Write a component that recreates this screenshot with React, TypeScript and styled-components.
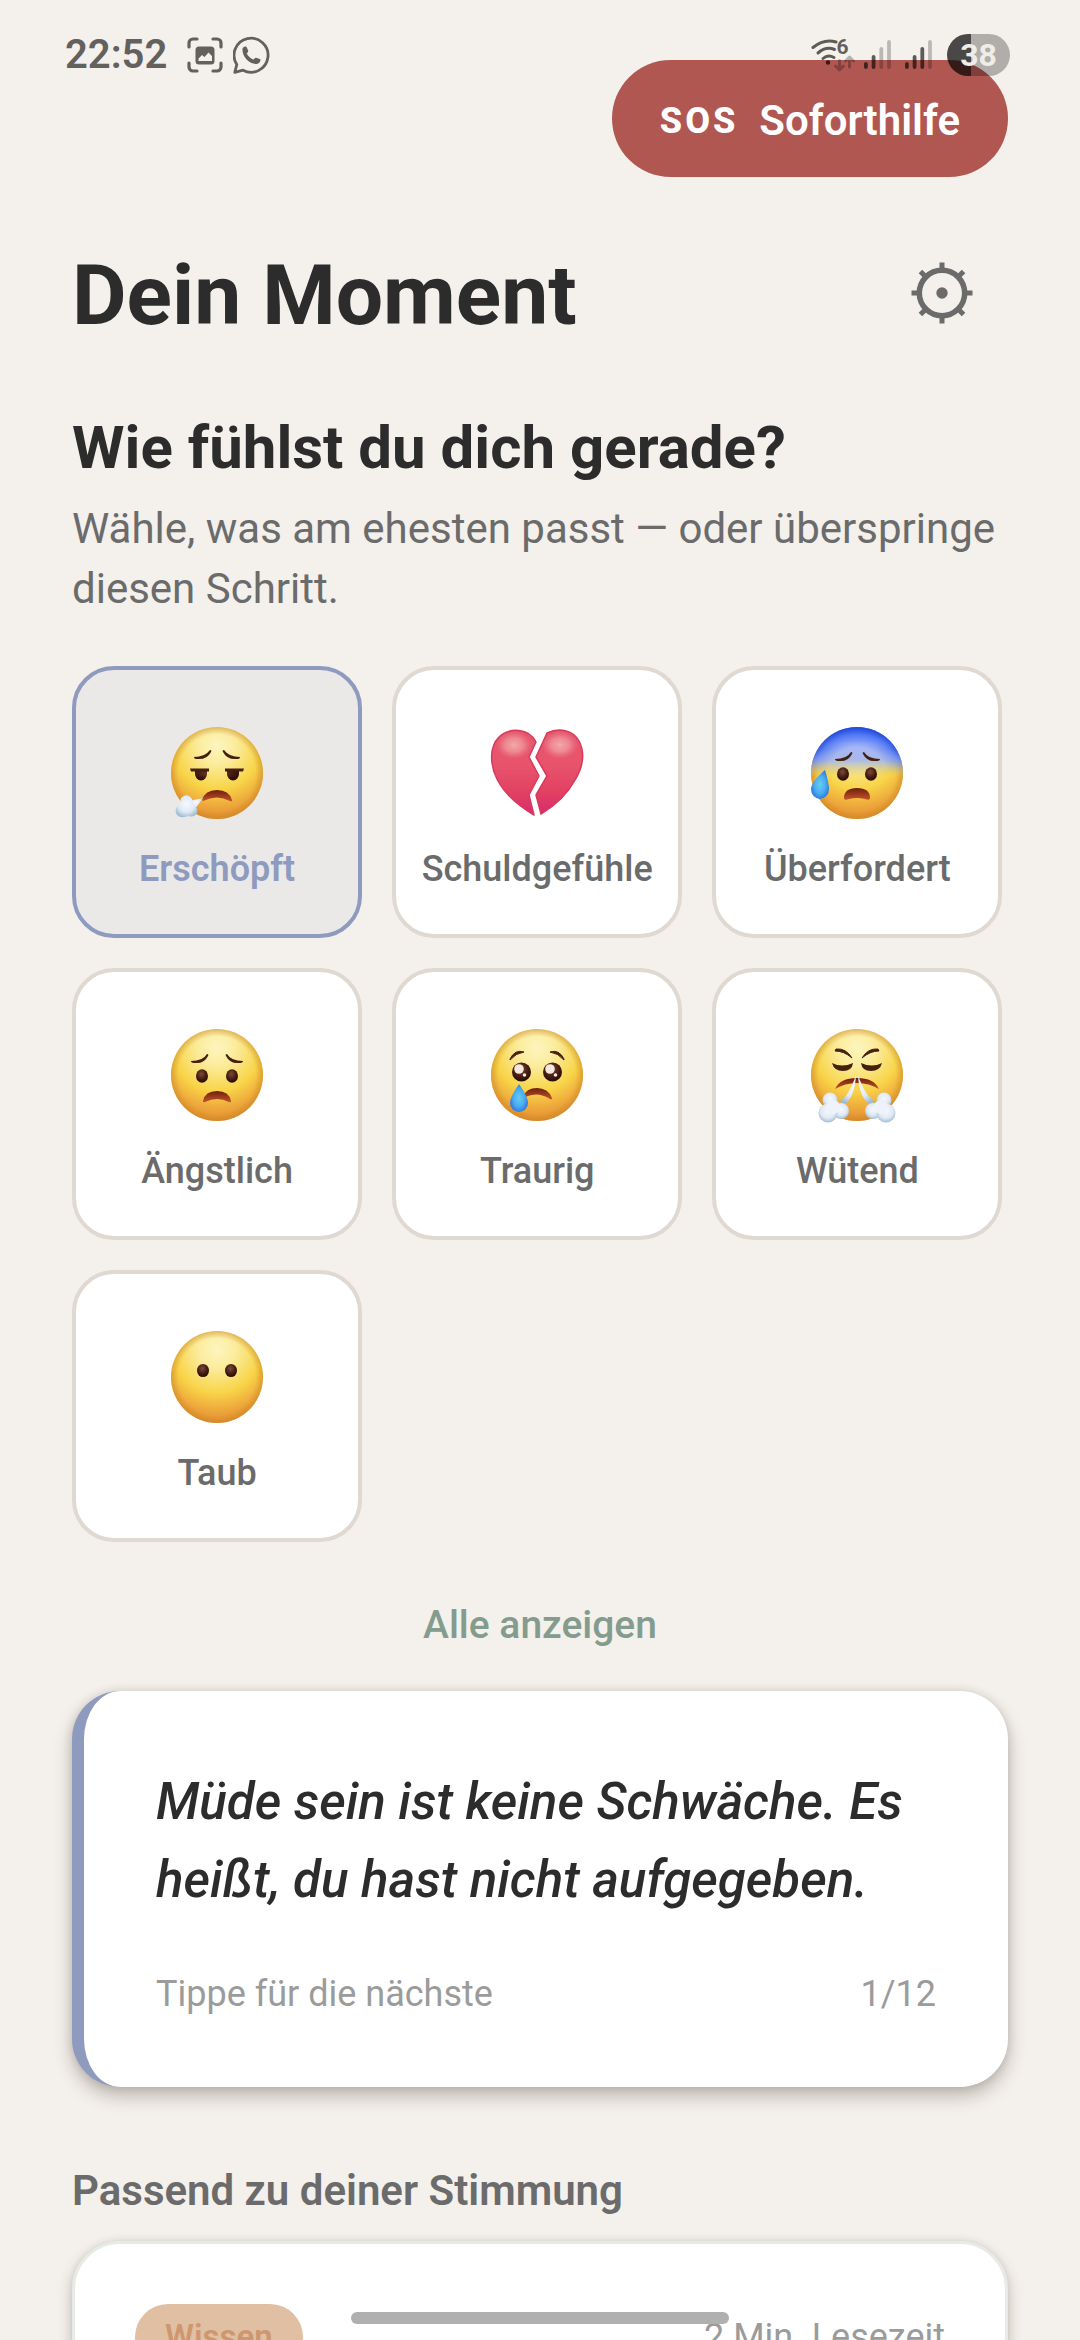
import React, { useId, useState } from "react";
import styled, { createGlobalStyle } from "styled-components";

const color = {
  page: "#f4f0eb",
  ink: "#2c2c2c",
  soft: "#6b6b6b",
  muted: "#9b9b9b",
  line: "#dfd9d1",
  blue: "#8e9bbf",
  green: "#839c8e",
  red: "#b15752",
};

const GlobalStyle = createGlobalStyle`
  * { box-sizing: border-box; }
  body {
    margin: 0;
    background: ${color.page};
    font-family: Roboto, "Noto Sans", sans-serif;
    color: ${color.ink};
  }
  button { font-family: inherit; border: 0; background: none; padding: 0; cursor: pointer; }
  h1, h2, h3, p { margin: 0; }
`;

const Screen = styled.div`
  position: relative;
  height: 100vh;
  overflow: hidden;
  padding: 60px 72px 0;
`;

const StatusBar = styled.div`
  position: absolute;
  top: 34px;
  left: 65px;
  right: 70px;
  height: 42px;
  display: flex;
  align-items: center;
  justify-content: space-between;
  pointer-events: none;
  z-index: 2;
`;

const StatusGroup = styled.div`
  display: flex;
  align-items: center;
`;

const Clock = styled.span`
  font-size: 40px;
  line-height: 42px;
  font-weight: 600;
  color: #62615e;
  margin-right: 20px;
`;

const Battery = styled.span`
  width: 63px;
  height: 42px;
  margin-left: 13px;
  border-radius: 21px;
  display: flex;
  align-items: center;
  justify-content: center;
  font-size: 32px;
  line-height: 42px;
  font-weight: 700;
  color: #f0ece8;
  background: linear-gradient(90deg, rgba(0, 0, 0, 0.7) 24px, rgba(0, 0, 0, 0.28) 24px);
`;

const SosRow = styled.div`
  display: flex;
  justify-content: flex-end;
`;

const SosButton = styled.button`
  display: flex;
  align-items: center;
  gap: 21px;
  height: 117px;
  padding: 4px 48px 0;
  border-radius: 60px;
  background: ${color.red};
  color: #fff;
  font-size: 42px;
  font-weight: 600;
`;

const SosMark = styled.span`
  font-size: 36px;
  font-weight: 800;
  letter-spacing: 3px;
`;

const Header = styled.header`
  display: flex;
  align-items: center;
  justify-content: space-between;
  margin-top: 52px;
`;

const Title = styled.h1`
  padding-top: 2px;
  font-size: 84px;
  line-height: 96px;
  font-weight: 700;
`;

const IconButton = styled.button`
  width: 132px;
  height: 132px;
  display: grid;
  place-items: center;
`;

const Question = styled.h2`
  margin-top: 51px;
  font-size: 60px;
  line-height: 72px;
  font-weight: 700;
`;

const Hint = styled.p`
  margin-top: 15px;
  font-size: 42px;
  line-height: 60px;
  color: ${color.soft};
`;

const MoodGrid = styled.div`
  display: grid;
  grid-template-columns: repeat(3, 31%);
  gap: 30px;
  margin-top: 47px;
`;

const MoodCard = styled.button<{ $active: boolean }>`
  height: 272px;
  display: flex;
  flex-direction: column;
  align-items: center;
  justify-content: center;
  gap: 29px;
  border: 4px solid ${(p) => (p.$active ? color.blue : color.line)};
  border-radius: 42px;
  background: ${(p) => (p.$active ? "#eae9e7" : "#fff")};
  color: ${(p) => (p.$active ? color.blue : color.soft)};
  font-size: 36px;
  line-height: 42px;
  font-weight: ${(p) => (p.$active ? 600 : 500)};
`;

const ShowAll = styled.button`
  display: block;
  margin: 29px auto 12px;
  padding: 30px;
  font-size: 39px;
  line-height: 48px;
  font-weight: 500;
  color: ${color.green};
`;

const QuoteCard = styled.button`
  display: block;
  width: 100%;
  padding: 72px;
  border-left: 12px solid ${color.blue};
  border-radius: 48px;
  background: #fff;
  text-align: left;
  box-shadow: 0 9px 18px rgba(60, 50, 40, 0.3), 0 0 9px rgba(60, 50, 40, 0.12);
`;

const Quote = styled.span`
  display: block;
  font-size: 51px;
  line-height: 78px;
  font-weight: 500;
  font-style: italic;
  color: ${color.ink};
`;

const QuoteFooter = styled.span`
  display: flex;
  justify-content: space-between;
  margin-top: 54px;
  font-size: 36px;
  line-height: 42px;
  color: ${color.muted};
`;

const SectionTitle = styled.h3`
  margin: 74px 0 20px;
  font-size: 42px;
  line-height: 60px;
  font-weight: 600;
  color: ${color.soft};
`;

const ArticleCard = styled.article`
  display: flex;
  align-items: center;
  justify-content: space-between;
  padding: 60px;
  border: 3px solid #e6ebe8;
  border-radius: 48px;
  background: #fff;
  box-shadow: 0 6px 15px rgba(60, 50, 40, 0.24), 0 0 6px rgba(60, 50, 40, 0.1);
`;

const Tag = styled.span`
  padding: 0 30px;
  border-radius: 36px;
  background: #e1bfa3;
  color: #cd9770;
  font-size: 33px;
  line-height: 66px;
  font-weight: 600;
`;

const ReadTime = styled.span`
  font-size: 36px;
  line-height: 42px;
  color: ${color.muted};
`;

const HomeHandle = styled.div`
  position: absolute;
  bottom: 16px;
  left: 50%;
  width: 35%;
  height: 12px;
  transform: translateX(-50%);
  border-radius: 6px;
  background: #b0b0b0;
`;

const EmojiSvg = styled.svg`
  display: block;
  overflow: visible;
`;

const ChatSvg = styled.svg`
  margin-left: 10px;
`;

type MoodKind = "tired" | "guilt" | "overwhelmed" | "anxious" | "sad" | "angry" | "numb";

const moods: { kind: MoodKind; label: string }[] = [
  { kind: "tired", label: "Erschöpft" },
  { kind: "guilt", label: "Schuldgefühle" },
  { kind: "overwhelmed", label: "Überfordert" },
  { kind: "anxious", label: "Ängstlich" },
  { kind: "sad", label: "Traurig" },
  { kind: "angry", label: "Wütend" },
  { kind: "numb", label: "Taub" },
];

const brown = "#45200f";

function Features({ kind, id }: { kind: MoodKind; id: string }) {
  const mouth = `url(#${id}mouth)`;
  const eye = `url(#${id}eye)`;
  const drop = `url(#${id}drop)`;
  const cloud = `url(#${id}cloud)`;
  switch (kind) {
    case "tired":
      return (
        <>
          <path d="M23 30q11 0 16-7q2 0 1 2q-4 8-14 7q-3 0-3-2zM69 30q-11 0-16-7q-2 0-1 2q4 8 14 7q3 0 3-2z" fill={brown} />
          <path d="M24 43h12v4a6 6.500 0 0 1-12 0zM56 43h12v4a6 6.500 0 0 1-12 0z" fill={eye} />
          <path d="M19 41.500h19v3H20zM54 41.500h19l-1 3H54z" fill={brown} />
          <path d="M31 73q3-10 15-10q12 0 15 10q1 2-2 1q-13-7-27 0z" fill={mouth} />
          <path d="M32 71L18 74l6 8z" fill={cloud} />
          <path d="M10 71q6-6 11 1q2 3 1 6q6 3 4 8q-3 5-9 3q-7 3-11-1q-4-6 3-11z" fill={cloud} />
        </>
      );
    case "overwhelmed":
      return (
        <>
          <path d="M24 32q12 0 16-7q2 0 1 2q-4 8-13 7q-4 0-4-2zM69 32q-12 0-16-7q-2 0-1 2q4 8 13 7q4 0 4-2z" fill={brown} />
          <ellipse cx="32" cy="47" rx="6" ry="6.800" fill={eye} />
          <ellipse cx="60" cy="47" rx="6" ry="6.800" fill={eye} />
          <path d="M33 71q0-10 13-10t13 10q0 3-5 1q-8-2-16 0q-5 2-5-1z" fill={mouth} />
          <path d="M14 43q4 13 4 19a9 10 0 0 1-18 0q0-7 14-19z" fill={drop} />
        </>
      );
    case "anxious":
      return (
        <>
          <path d="M20 32q12 0 16-7q2 0 1 2q-4 8-13 7q-4 0-4-2zM72 32q-12 0-16-7q-2 0-1 2q4 8 13 7q4 0 4-2z" fill={brown} />
          <ellipse cx="31" cy="47" rx="6" ry="6.800" fill={eye} />
          <ellipse cx="61" cy="47" rx="6" ry="6.800" fill={eye} />
          <path d="M32 72q2-10 14-10t14 10q0 2-2 1q-12-6-24 0q-2 1-2-1z" fill={mouth} />
        </>
      );
    case "sad":
      return (
        <>
          <path d="M19 30q5-10 14-7q-8 1-14 8zM73 30q-5-10-14-7q8 1 14 8z" fill={brown} stroke={brown} strokeWidth="1" />
          <circle cx="30.500" cy="43" r="9.500" fill={eye} />
          <circle cx="61.500" cy="43" r="9.500" fill={eye} />
          <ellipse cx="28" cy="40" rx="4.800" ry="4.800" fill="#f3e8df" />
          <ellipse cx="59" cy="40" rx="4.800" ry="4.800" fill="#f3e8df" />
          <circle cx="33.500" cy="46" r="1.800" fill="#f3e8df" />
          <circle cx="64.500" cy="46" r="1.800" fill="#f3e8df" />
          <path d="M32 68q3-9 14-9q11 0 15 10q1 2-2 1q-12-8-25-2z" fill={mouth} />
          <path d="M28 55q9 13 9 19a9 9 0 0 1-18 0q0-6 9-19z" fill={drop} />
        </>
      );
    case "angry":
      return (
        <>
          <path d="M25 20q10-1 16 9q-8-7-17-7zM67 20q-10-1-16 9q8-7 17-7z" fill={brown} stroke={brown} strokeWidth="1" />
          <path d="M21 34q10 5 21 0q-1 8-10 8t-11-8zM71 34q-10 5-21 0q1 8 10 8t11-8z" fill={brown} />
          <path d="M24 60q5-11 22-11t22 11q-10-6-22-6t-22 6z" fill={mouth} />
          <path d="M45 46q-8 23-17 26l5 4q11-8 12-30zM47 46q8 23 17 26l-5 4q-11-8-12-30z" fill={cloud} />
          <circle cx="19" cy="71" r="7.500" fill={cloud} />
          <circle cx="30" cy="82" r="8" fill={cloud} />
          <circle cx="17" cy="84" r="9.500" fill={cloud} />
          <circle cx="22" cy="78" r="7" fill="#eef3fb" />
          <circle cx="73" cy="71" r="7.500" fill={cloud} />
          <circle cx="62" cy="82" r="8" fill={cloud} />
          <circle cx="75" cy="84" r="9.500" fill={cloud} />
          <circle cx="70" cy="78" r="7" fill="#eef3fb" />
        </>
      );
    default:
      return (
        <>
          <ellipse cx="32" cy="39.500" rx="6" ry="6.600" fill={eye} />
          <ellipse cx="60" cy="39.500" rx="6" ry="6.600" fill={eye} />
        </>
      );
  }
}

function MoodEmoji({ kind }: { kind: MoodKind }) {
  const id = "m" + useId().replace(/[^a-zA-Z0-9]/g, "");
  return (
    <EmojiSvg width="104" height="104" viewBox="-6 -12 104 104" aria-hidden="true">
      <defs>
        <radialGradient id={`${id}face`} cx="0.5" cy="0.2" r="0.82">
          <stop offset="0" stopColor="#fdf5bf" />
          <stop offset="0.25" stopColor="#fbec9c" />
          <stop offset="0.58" stopColor="#f8d448" />
          <stop offset="0.82" stopColor="#eda63b" />
          <stop offset="1" stopColor="#e08a2e" />
        </radialGradient>
        <radialGradient id={`${id}rim`} cx="0.5" cy="0.5" r="0.5">
          <stop offset="0.84" stopColor="#c88420" stopOpacity="0" />
          <stop offset="1" stopColor="#c88420" stopOpacity="0.5" />
        </radialGradient>
        <linearGradient id={`${id}blue`} x1="0" y1="0" x2="0" y2="1">
          <stop offset="0" stopColor="#6d90f8" />
          <stop offset="0.18" stopColor="#a3b6fa" />
          <stop offset="0.36" stopColor="#aab9ea" />
          <stop offset="0.54" stopColor="#d0c880" stopOpacity="0" />
        </linearGradient>
        <radialGradient id={`${id}blueRim`} cx="0.5" cy="0.55" r="0.55">
          <stop offset="0.6" stopColor="#2f5cf0" stopOpacity="0" />
          <stop offset="0.85" stopColor="#2f5cf0" stopOpacity="0.6" />
          <stop offset="1" stopColor="#1c46d8" />
        </radialGradient>
        <linearGradient id={`${id}fade`} x1="0" y1="0" x2="0" y2="1">
          <stop offset="0.25" stopColor="#fff" />
          <stop offset="0.5" stopColor="#000" />
        </linearGradient>
        <mask id={`${id}top`}>
          <rect width="92" height="92" fill={`url(#${id}fade)`} />
        </mask>
        <radialGradient id={`${id}eye`} cx="0.45" cy="0.35" r="0.6">
          <stop offset="0" stopColor="#7a4a3a" />
          <stop offset="0.7" stopColor="#421a0e" />
          <stop offset="1" stopColor="#2e0f06" />
        </radialGradient>
        <linearGradient id={`${id}mouth`} x1="0" y1="0" x2="0" y2="1">
          <stop offset="0" stopColor="#6e1f0e" />
          <stop offset="1" stopColor="#c5532a" />
        </linearGradient>
        <radialGradient id={`${id}drop`} cx="0.5" cy="0.5" r="0.6">
          <stop offset="0" stopColor="#64cdf2" />
          <stop offset="0.5" stopColor="#4aaef0" />
          <stop offset="1" stopColor="#2767dc" />
        </radialGradient>
        <radialGradient id={`${id}cloud`} cx="0.5" cy="0.4" r="0.62">
          <stop offset="0" stopColor="#f6f9ff" />
          <stop offset="0.6" stopColor="#e0e9f4" />
          <stop offset="1" stopColor="#9dbbd2" />
        </radialGradient>
        <linearGradient id={`${id}heart`} x1="0" y1="0" x2="0" y2="1">
          <stop offset="0" stopColor="#e4566c" />
          <stop offset="0.4" stopColor="#e8546c" />
          <stop offset="0.75" stopColor="#e24062" />
          <stop offset="1" stopColor="#d62a70" />
        </linearGradient>
        <radialGradient id={`${id}shine`}>
          <stop offset="0" stopColor="#f3a9a8" />
          <stop offset="0.5" stopColor="#f0959b" stopOpacity="0.8" />
          <stop offset="1" stopColor="#ee7f8b" stopOpacity="0" />
        </radialGradient>
      </defs>
      {kind === "guilt" ? (
        <>
          <g fill={`url(#${id}heart)`} stroke="#d83a5c" strokeWidth="1.500" strokeLinejoin="round">
            <path d="M45 15C38 1 19 0 8 10C-2 20-1 38 6 52C14 68 31 81 43 88L38 68L48 49L38 30Z" />
            <path d="M56 6C68 0 82 3 88 14C95 27 91 42 84 53C76 68 62 80 50 87L45 68L56 49L45 30Z" />
          </g>
          <ellipse cx="23" cy="18" rx="18" ry="14" fill={`url(#${id}shine)`} />
          <ellipse cx="69" cy="18" rx="18" ry="14" fill={`url(#${id}shine)`} />
        </>
      ) : (
        <>
          <circle cx="46" cy="46" r="46" fill={`url(#${id}face)`} />
          <circle cx="46" cy="46" r="46" fill={`url(#${id}rim)`} />
          {kind === "overwhelmed" && (
            <>
              <circle cx="46" cy="46" r="46" fill={`url(#${id}blue)`} />
              <circle cx="46" cy="46" r="46" fill={`url(#${id}blueRim)`} mask={`url(#${id}top)`} />
            </>
          )}
          <Features kind={kind} id={id} />
        </>
      )}
    </EmojiSvg>
  );
}

function CaptureIcon() {
  return (
    <svg width="36" height="36" viewBox="0 0 36 36" fill="none" aria-hidden="true">
      <path
        d="M2 10V6a4 4 0 0 1 4-4h4M26 2h4a4 4 0 0 1 4 4v4M34 26v4a4 4 0 0 1-4 4h-4M10 34H6a4 4 0 0 1-4-4v-4"
        stroke="#62615e"
        strokeWidth="3.200"
        strokeLinecap="round"
      />
      <rect x="8.500" y="9.500" width="19" height="18" rx="3.500" fill="#62615e" />
      <path d="M11.500 24v-2.500l3.500-3.500 2.500 2 4-4.500 3.500 3.500v5z" fill={color.page} />
    </svg>
  );
}

function ChatCallIcon() {
  return (
    <ChatSvg width="37" height="38" viewBox="0 0 37 38" fill="none" aria-hidden="true">
      <path
        d="M3.800 28.500A17 17 0 1 1 10 34.200L1.800 36.300z"
        stroke="#62615e"
        strokeWidth="2.800"
        strokeLinejoin="round"
      />
      <path
        d="M9.500 12.500c.8-1.800 2.500-2.500 3.900-1.800l1.800 3.900c.3 1-.9 2.300-1.500 3 1.500 2.700 3.700 4.900 6.500 6 .9-.5 1.900-2 2.900-1.900l4.300 1.500c.4 2-.9 4.300-3.900 4.800-7.500.3-14.700-7.500-14-15.500z"
        fill="#62615e"
      />
    </ChatSvg>
  );
}

const SmallSix = styled.text`
  font-family: Roboto, sans-serif;
  font-size: 21px;
  font-weight: 700;
`;

/* Wi-Fi with traffic arrows, followed by the two SIM signal meters. */
function NetworkIcons() {
  const tops = [28, 21, 13, 6];
  return (
    <svg width="123" height="42" viewBox="811 34 123 42" fill="none" aria-hidden="true">
      <g stroke="#000" strokeOpacity="0.62" strokeWidth="3" strokeLinecap="round">
        <path d="M813 47.500Q824 38.500 836 42" />
        <path d="M818 53Q826 46 834.500 49.500" />
        <path d="M823 58.500Q828 54 834 57.500" />
      </g>
      <circle cx="828" cy="62.500" r="2.200" fill="#000" fillOpacity="0.7" />
      <SmallSix x="836.500" y="54" fill="#000" fillOpacity="0.62">
        6
      </SmallSix>
      <g stroke="#000" strokeOpacity="0.26" strokeWidth="3" strokeLinecap="round" strokeLinejoin="round">
        <path d="M839.500 60.500v9M835.500 66l4 4 4-4" />
        <path d="M849.500 67v-9M845.500 61l4-4 4 4" />
      </g>
      {[864, 905].map((x, sim) =>
        tops.map((t, i) => (
          <rect
            key={`${x}-${t}`}
            x={x + i * 7.7}
            y={34 + t}
            width="3.800"
            height={35 - t}
            rx="1.900"
            fill="#000"
            fillOpacity={i < 2 + sim ? 0.62 : 0.23}
          />
        ))
      )}
    </svg>
  );
}

function GearIcon() {
  return (
    <svg width="66" height="66" viewBox="0 2 66 66" fill="none" stroke={color.soft} aria-hidden="true">
      <circle cx="33" cy="33" r="22.700" strokeWidth="5.500" />
      <circle cx="33" cy="33" r="5.700" fill={color.soft} stroke="none" />
      {[0, 45, 90, 135, 180, 225, 270, 315].map((a) => (
        <path key={a} d="M33 10V2.500" strokeWidth="5" transform={`rotate(${a} 33 33)`} />
      ))}
    </svg>
  );
}

export default function App() {
  const [active, setActive] = useState<MoodKind>("tired");
  return (
    <>
      <GlobalStyle />
      <Screen>
        <StatusBar>
          <StatusGroup>
            <Clock>22:52</Clock>
            <CaptureIcon />
            <ChatCallIcon />
          </StatusGroup>
          <StatusGroup>
            <NetworkIcons />
            <Battery>38</Battery>
          </StatusGroup>
        </StatusBar>

        <SosRow>
          <SosButton type="button">
            <SosMark>SOS</SosMark>
            <span>Soforthilfe</span>
          </SosButton>
        </SosRow>

        <Header>
          <Title>Dein Moment</Title>
          <IconButton type="button" aria-label="Einstellungen">
            <GearIcon />
          </IconButton>
        </Header>

        <main>
          <Question>Wie fühlst du dich gerade?</Question>
          <Hint>Wähle, was am ehesten passt — oder überspringe diesen Schritt.</Hint>

          <MoodGrid>
            {moods.map((m) => (
              <MoodCard
                key={m.kind}
                type="button"
                $active={m.kind === active}
                aria-pressed={m.kind === active}
                onClick={() => setActive(m.kind)}
              >
                <MoodEmoji kind={m.kind} />
                <span>{m.label}</span>
              </MoodCard>
            ))}
          </MoodGrid>

          <ShowAll type="button">Alle anzeigen</ShowAll>

          <QuoteCard type="button">
            <Quote>Müde sein ist keine Schwäche. Es heißt, du hast nicht aufgegeben.</Quote>
            <QuoteFooter>
              <span>Tippe für die nächste</span>
              <span>1/12</span>
            </QuoteFooter>
          </QuoteCard>

          <SectionTitle>Passend zu deiner Stimmung</SectionTitle>
          <ArticleCard>
            <Tag>Wissen</Tag>
            <ReadTime>2 Min. Lesezeit</ReadTime>
          </ArticleCard>
        </main>
        <HomeHandle />
      </Screen>
    </>
  );
}
